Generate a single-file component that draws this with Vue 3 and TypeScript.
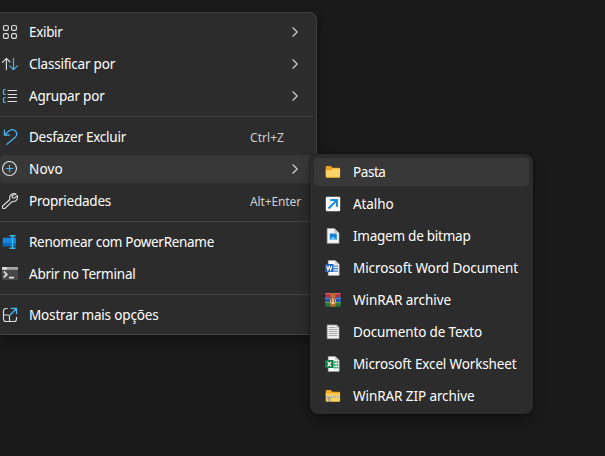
<script setup lang="ts">
interface Item {
  label: string
  icon: string
  width: number
  arrow?: boolean
  shortcut?: string
  shortcutWidth?: number
  active?: boolean
}

const groups: Item[][] = [
  [
    { label: 'Exibir', icon: 'view', width: 33.5, arrow: true },
    { label: 'Classificar por', icon: 'sort', width: 86, arrow: true },
    { label: 'Agrupar por', icon: 'group', width: 75.5, arrow: true },
  ],
  [
    { label: 'Desfazer Excluir', icon: 'undo', width: 97, shortcut: 'Ctrl+Z', shortcutWidth: 34 },
    { label: 'Novo', icon: 'new', width: 34, arrow: true, active: true },
    { label: 'Propriedades', icon: 'props', width: 82, shortcut: 'Alt+Enter', shortcutWidth: 51 },
  ],
  [
    { label: 'Renomear com PowerRename', icon: 'rename', width: 185 },
    { label: 'Abrir no Terminal', icon: 'terminal', width: 106.5 },
  ],
  [{ label: 'Mostrar mais opções', icon: 'more', width: 129.5 }],
]

const newItems: Item[] = [
  { label: 'Pasta', icon: 'folder', width: 32.5, active: true },
  { label: 'Atalho', icon: 'shortcut', width: 40.5 },
  { label: 'Imagem de bitmap', icon: 'bitmap', width: 117.5 },
  { label: 'Microsoft Word Document', icon: 'word', width: 165 },
  { label: 'WinRAR archive', icon: 'rar', width: 98 },
  { label: 'Documento de Texto', icon: 'text', width: 129 },
  { label: 'Microsoft Excel Worksheet', icon: 'excel', width: 163.5 },
  { label: 'WinRAR ZIP archive', icon: 'zip', width: 121.5 },
]

// Spreads a label's letters so that it takes up its intended width.
const vFit = {
  mounted(el: HTMLElement, binding: { value?: number }) {
    if (!binding.value) return
    const natural = el.getBoundingClientRect().width
    const count = (el.textContent ?? '').length
    el.style.letterSpacing = `${(binding.value - natural) / count}px`
  },
}
</script>

<template>
  <main class="desktop">
    <nav class="menu main-menu">
      <ul v-for="(group, g) in groups" :key="g" class="group">
        <li v-for="item in group" :key="item.label" class="row" :class="{ active: item.active }">
          <svg class="icon" viewBox="0 0 16 16" fill="none" stroke="#dedede" stroke-width="1.15" stroke-linecap="round" stroke-linejoin="round">
            <template v-if="item.icon === 'view'">
              <rect x="1.5" y="1.5" width="4.8" height="4.8" rx="1.3" />
              <rect x="9.6" y="1.5" width="4.8" height="4.8" rx="1.3" />
              <rect x="1.5" y="9.6" width="4.8" height="4.8" rx="1.3" />
              <rect x="9.6" y="9.6" width="4.8" height="4.8" rx="1.3" />
            </template>
            <template v-else-if="item.icon === 'sort'">
              <path d="M4.4 13.6V2.5M.5 6.3 4.4 2.4 8 6" />
              <path stroke="#4cb8f5" d="M11.5 2.4v11.2M7.6 9.8l3.9 3.9 3.9-3.9" />
            </template>
            <template v-else-if="item.icon === 'group'">
              <path stroke="#4cb8f5" d="M3.3 1.5H2.5a1 1 0 0 0-1 1v2.9a1 1 0 0 0 1 1h.8M3.3 9.5h-.8a1 1 0 0 0-1 1v2.9a1 1 0 0 0 1 1h.8" />
              <path d="M6 2.5h8.5M6 6.5h8.5M6 9.5h8.5M6 13.5h8.5" />
            </template>
            <template v-else-if="item.icon === 'undo'">
              <path stroke="#4cb8f5" stroke-width="1.2" d="M2.4 1.2v5h5M2.6 6 6.6 2.2C9 .1 12 .3 13.6 2.2c1.5 1.8 1.4 4.2-.3 6L4.7 15.4" />
            </template>
            <template v-else-if="item.icon === 'new'">
              <circle cx="7.5" cy="7.5" r="7" />
              <path stroke="#4cb8f5" d="M7.5 4.2v6.6M4.2 7.5h6.6" />
            </template>
            <template v-else-if="item.icon === 'props'">
              <path d="M13.9.9a4.5 4.5 0 0 0-6 5.6L.9 12.7a1.7 1.7 0 0 0 2.4 2.5l6.7-6.6a4.5 4.5 0 0 0 5.2-6l-2.7 2.6-2-.5-.4-1.9z" />
            </template>
            <template v-else-if="item.icon === 'rename'">
              <path stroke="none" fill="#1687df" d="M1.5 3.8H14v8.4H1.5q-.7 0-.7-.7v-7q0-.7.7-.7z" />
              <path stroke="none" fill="#0868b8" d="M.8 9H14v3.2H1.5q-.7 0-.7-.7z" />
              <path stroke="#35b7ed" stroke-width="1.6" stroke-linecap="butt" d="M10.5 2v12M7.5 1.8h6M7.5 14.2h6" />
            </template>
            <template v-else-if="item.icon === 'terminal'">
              <rect stroke="none" x="0" y="1" width="16" height="13" rx="1" fill="#484848" />
              <path stroke="none" fill="#a5a5a5" d="M1 1h14q1 0 1 1v1.8H0V2q0-1 1-1z" />
              <path stroke="none" fill="#dadada" d="M1 1h4v2.8H0V2q0-1 1-1z" />
              <path stroke-width="1.8" stroke-linecap="butt" stroke-linejoin="miter" d="m1.8 5.4 3 3-3 3M7 11.6h5" />
            </template>
            <template v-else>
              <path d="M5.2 1.5H4A2.5 2.5 0 0 0 1.5 4v8A2.5 2.5 0 0 0 4 14.5h8a2.5 2.5 0 0 0 2.5-2.5v-1.8M1.5 8h4a2 2 0 0 1 2 2v4.3" />
              <path stroke="#4cb8f5" stroke-width="1.3" d="m8 8 6.4-6.4M9.2 1.4h5.3v5.2" />
            </template>
          </svg>
          <span class="label"><span v-fit="item.width">{{ item.label }}</span></span>
          <span v-if="item.shortcut" class="keys"><span v-fit="item.shortcutWidth">{{ item.shortcut }}</span></span>
          <svg v-if="item.arrow" class="chevron" viewBox="0 0 8 12"><path d="m1.6 1.5 4.6 4.5-4.6 4.5" /></svg>
        </li>
      </ul>
    </nav>

    <nav class="menu sub-menu">
      <ul class="group">
        <li v-for="item in newItems" :key="item.label" class="row" :class="{ active: item.active }">
          <svg class="icon" viewBox="0 0 16 16">
            <template v-if="item.icon === 'folder'">
              <path fill="#eba21c" d="M1.7 2h4l1.8 1.8h6.3q1.3 0 1.3 1.3V8H.7V3q0-1 1-1z" />
              <path fill="#ffd568" d="M.7 6.2h5.5l1.6-1.6h6.2q1.1 0 1.1 1v6.8q0 1.2-1.2 1.2h-12q-1.2 0-1.2-1.2z" />
              <path fill="#e5aa31" d="M.8 12.7h14.2q-.2 1-1.2 1H2q-1 0-1.2-1z" />
            </template>
            <template v-else-if="item.icon === 'shortcut'">
              <rect x=".8" y=".8" width="14.4" height="14.4" rx="1.2" fill="#fbfbfb" />
              <path fill="none" stroke="#178bdc" stroke-width="2" d="M3.5 12.5 11.6 4.4M5.3 4.1h6.6v6.6" />
            </template>
            <template v-else-if="item.icon === 'bitmap'">
              <path fill="#f5f5f5" stroke="#a9a9a9" stroke-width=".7" d="M2.2.6h7.2L14 5v10.3H2.2z" />
              <path fill="#c6c6c6" d="M9.4.8V5h4.4z" />
              <rect x="4.8" y="5.5" width="7" height="6.5" rx=".8" fill="#1683db" />
              <path fill="#72cbfa" d="m4.8 11.7 3-3.2 4 3.3q-.3.2-.8.2H5.6z" />
            </template>
            <template v-else-if="item.icon === 'word' || item.icon === 'excel'">
              <path fill="#f8f8f8" stroke="#a5a5a5" stroke-width=".6" d="M3.2.5h7l4 3.8v11.1h-11z" />
              <path fill="#cacaca" d="M10.2.7v3.6H14z" />
              <template v-if="item.icon === 'word'">
                <path stroke="#3d83d2" stroke-width="1.2" d="M9 6.2h4M9 8.7h4M9 11.2h4" />
                <rect x="0" y="4" width="8.6" height="8" rx=".6" fill="#1b5dbe" />
                <path fill="none" stroke="#fff" stroke-width="1.1" d="m1.7 5.8 1.2 4.3 1.4-4 1.4 4 1.2-4.3" />
              </template>
              <template v-else>
                <path fill="#21a366" d="M9 5.3h1.8v1.8H9zM11.5 5.3h1.8v1.8h-1.8zM9 8h1.8v1.8H9zM11.5 8h1.8v1.8h-1.8zM9 10.7h1.8v1.8H9zM11.5 10.7h1.8v1.8h-1.8z" />
                <rect x="0" y="4" width="8.6" height="8" rx=".6" fill="#107c41" />
                <path stroke="#fff" stroke-width="1.3" d="m2.6 5.8 3.5 4.5M6.1 5.8l-3.5 4.5" />
              </template>
            </template>
            <template v-else-if="item.icon === 'rar'">
              <path fill="#b72d50" d="M.5 1h15v4.6H.5z" />
              <path fill="#ee5b69" d="M.5 1h15v1.2H.5z" />
              <path fill="#2856ad" d="M0 5.6h16v4.5H0z" />
              <path fill="#6496db" d="M0 5.6h16v1H0z" />
              <path fill="#29783c" d="M.3 10.1h15.5v4.6H.3z" />
              <path fill="#66b15c" d="M.3 10.1h15.5v1H.3z" />
              <path fill="#bd692b" d="M5.5 1h5v13.7h-5z" />
              <path fill="#8c3f20" d="M5.5 5h5v6h-5z" />
              <path fill="none" stroke="#f3be78" d="M5.7 11V7.4q2.3-3.2 4.6 0V11z" />
              <path stroke="#fff0d0" stroke-width="1.3" d="M8 7v5" />
            </template>
            <template v-else-if="item.icon === 'text'">
              <path fill="#ededed" stroke="#aaa" stroke-width=".7" d="M2.2 1h9.6L14 3.2v11.5H2.2z" />
              <path fill="#a2a2a2" d="M11.5 1v2.5H14z" />
              <path stroke="#a1a1a1" stroke-width=".9" d="M3.8 3.5h6.6M3.8 5.5h8.5M3.8 7.5h8.5M3.8 9.5h8.5M3.8 11.5h8.5" />
            </template>
            <template v-else>
              <path fill="#efac22" d="M1.7 2h4l1.7 1.7h6.5q1.2 0 1.2 1.2v2H.7V3q0-1 1-1z" />
              <path fill="#ffd35b" d="M.7 5.6h14.4v6.9q0 1.2-1.2 1.2h-12q-1.2 0-1.2-1.2z" />
              <path fill="#aaa592" d="M.8 7.8H15v1.8H.8z" />
              <path stroke="#dedac8" stroke-width="1.6" stroke-dasharray="1 1" d="M1.2 8.7H15" />
              <path fill="#777" d="M2.8 9.5h2.7v4H2.8z" />
              <path stroke="#ece8d9" d="M4.2 10v3" />
            </template>
          </svg>
          <span class="label"><span v-fit="item.width">{{ item.label }}</span></span>
        </li>
      </ul>
    </nav>
  </main>
</template>

<style>
body {
  background: #1a1a1a;
}
</style>

<style scoped>
.desktop {
  position: relative;
  box-sizing: border-box;
  width: 605px;
  height: 456px;
  padding-top: 12px;
  overflow: hidden;
  background: #1a1a1a;
  color: #fff;
  font: 13.5px/20px 'Noto Sans', 'Open Sans', sans-serif;
}
.menu {
  box-sizing: border-box;
  background: #2c2c2c;
}
.main-menu {
  width: 317px;
  padding: 3px 3px 3px 0;
  border: 1px solid #404040;
  border-left: 0;
  border-radius: 0 8px 8px 0;
  box-shadow: 0 5px 12px rgba(0, 0, 0, 0.32);
}
.sub-menu {
  position: absolute;
  left: 310px;
  top: 154px;
  width: 223px;
  height: 260px;
  padding: 2px 4px;
  border-radius: 8px;
  box-shadow: 0 0 2px rgba(0, 0, 0, 0.65), 0 5px 12px rgba(0, 0, 0, 0.35);
}
.group {
  display: flow-root;
  list-style: none;
  margin: 0;
  padding: 0;
}
.group + .group {
  margin-top: 4px;
  padding-top: 4px;
  border-top: 1px solid #414141;
}
.row {
  display: flex;
  align-items: center;
  box-sizing: border-box;
  height: 28px;
  margin: 2px 0;
  padding-left: 2px;
  border-radius: 4px;
}
.row + .row {
  margin-top: 4px;
}
.sub-menu .row {
  padding-left: 11px;
}
.active {
  background: #383838;
}
.icon {
  flex: none;
  width: 16px;
  height: 16px;
}
.label {
  flex: 1;
  margin-left: 11px;
  white-space: nowrap;
}
.sub-menu .label {
  margin-left: 12px;
}
.label span,
.keys span {
  display: inline-block;
}
.keys {
  width: 63px;
  padding-top: 1px;
  color: #cfcfcf;
  font-size: 12px;
  white-space: nowrap;
}
.chevron {
  width: 8px;
  height: 12px;
  margin-right: 14px;
  fill: none;
  stroke: #d0d0d0;
  stroke-width: 1.2;
}
</style>
